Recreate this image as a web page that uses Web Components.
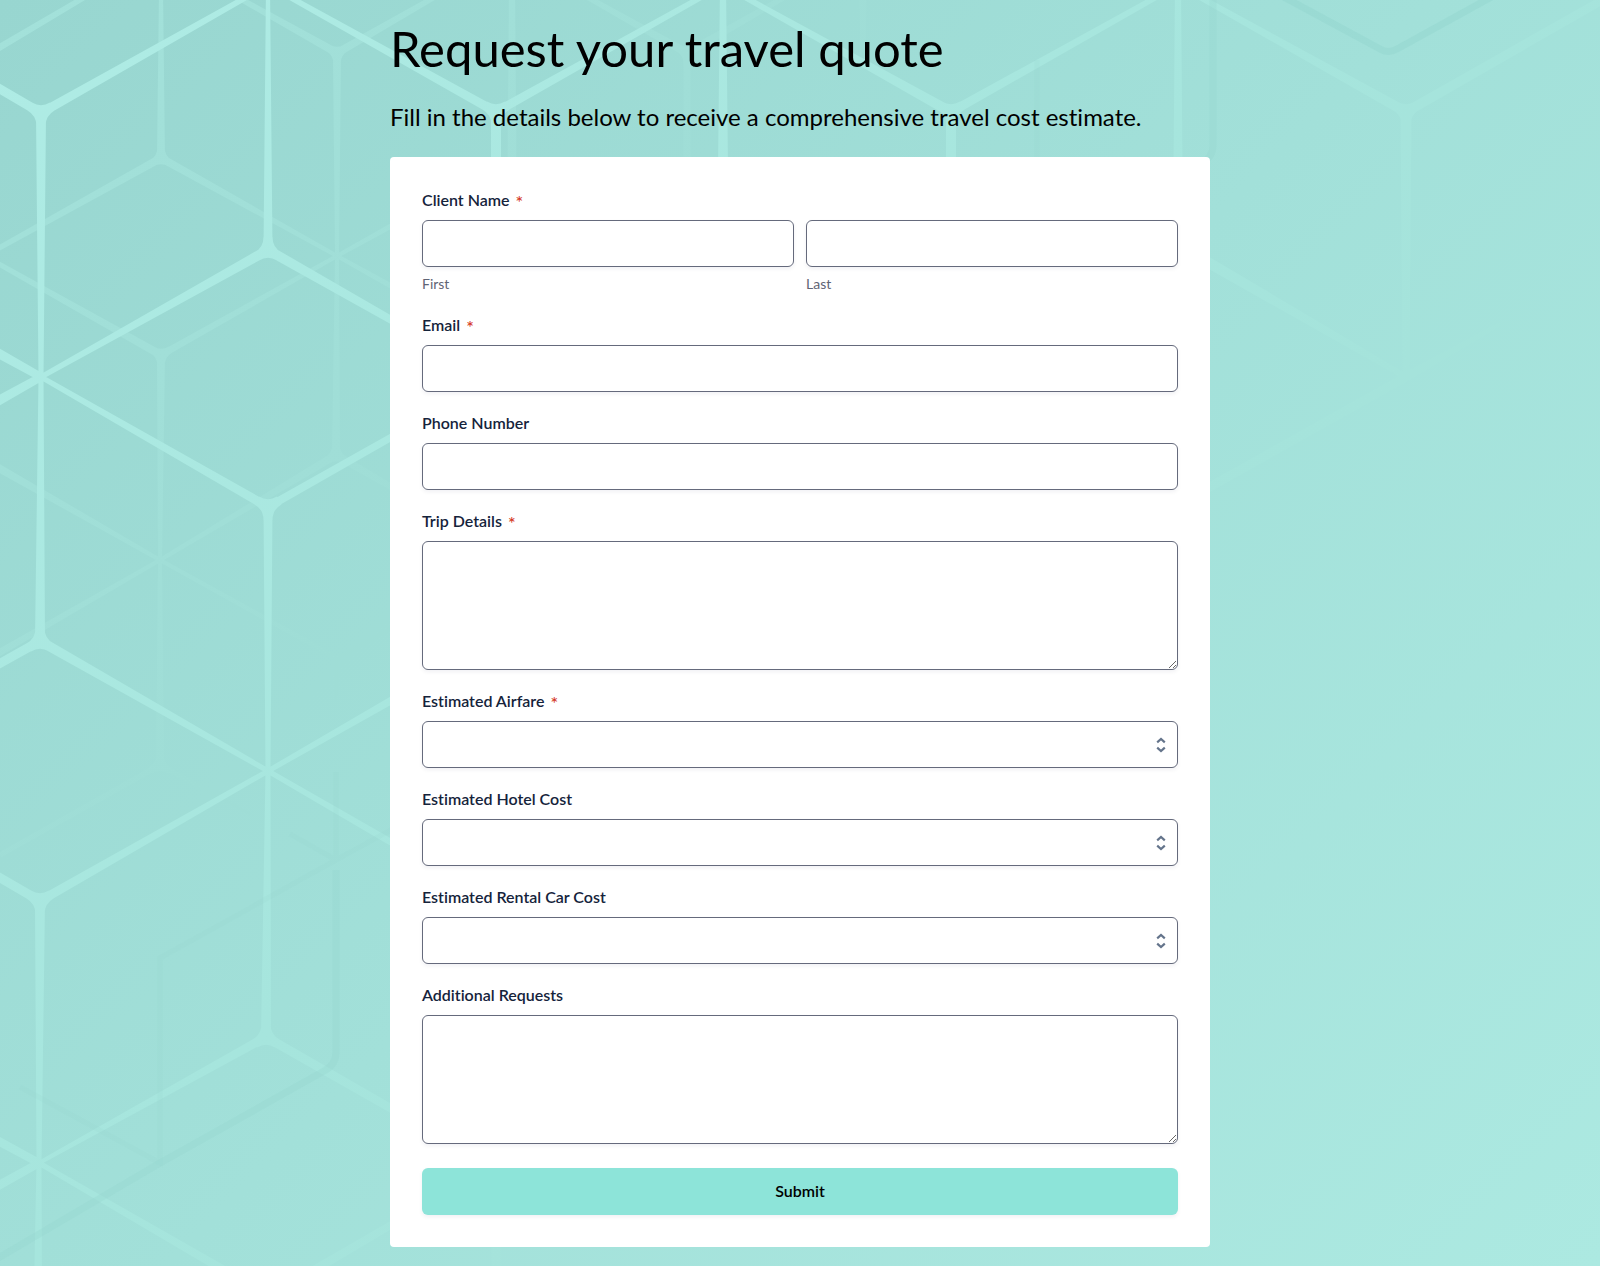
<!DOCTYPE html>
<html lang="en">
<head>
<meta charset="utf-8">
<meta name="viewport" content="width=device-width, initial-scale=1">
<title>Request your travel quote</title>
<style>
  body { margin: 0; font-family: Lato, "Open Sans", sans-serif; font-variant-ligatures: none; color: #000; }
</style>
</head>
<body>
<quote-page>
  <page-heading>
    <span slot="title">Request your travel quote</span>
    <span slot="intro">Fill in the details below to receive a comprehensive travel cost estimate.</span>
  </page-heading>
  <form-card>
    <name-field required>Client Name</name-field>
    <form-field type="email" required>Email</form-field>
    <form-field type="tel">Phone Number</form-field>
    <form-field type="textarea" required>Trip Details</form-field>
    <form-field type="select" required>Estimated Airfare</form-field>
    <form-field type="select">Estimated Hotel Cost</form-field>
    <form-field type="select">Estimated Rental Car Cost</form-field>
    <form-field type="textarea">Additional Requests</form-field>
    <submit-button slot="action">Submit</submit-button>
  </form-card>
</quote-page>

<script>
  const define = (name, html, setup) => {
    const template = document.createElement('template');
    template.innerHTML = html;
    customElements.define(name, class extends HTMLElement {
      constructor() {
        super();
        this.attachShadow({ mode: 'open' }).append(template.content.cloneNode(true));
      }
      connectedCallback() { if (setup) setup(this, this.shadowRoot); }
    });
  };

  const controlStyles = `
    *, *::before { box-sizing: border-box; }
    :host { display: block; }
    label, legend { padding: 0; color: #15233b; font-size: 16px; font-weight: 600; line-height: 22px; }
    .mark { color: #d4351c; font-size: 18px; font-weight: 500; line-height: 1; margin-left: 6px; vertical-align: -3px; }
    input, textarea, select {
      display: block; width: 100%; height: 47px; margin: 9px 0 0; padding: 8px 12px;
      font: inherit; font-size: 16px; color: #15233b; background-color: #fff;
      border: 1px solid #656a7c; border-radius: 6px;
      box-shadow: 0 2px 4px rgba(24, 24, 60, .06);
    }
    textarea { height: 129px; resize: vertical; }
    select { appearance: none; }
  `;

  /* Each edge: x1, y1, x2, y2, width at start, width at end */
  const bright = [
    [268,-15,268,250,4,9],[41,113,41,377,10,5],[41,377,40,641,5,10],[268,507,268,771,9,5],
    [268,771,266,1037,5,10],[40,901,39,1163,10,5],[39,1163,38,1290,5,8],
    [-10,83,41,113,9,9],[41,113,268,-15,9,5],[268,-15,496,112,5,9],[268,250,41,377,10,5],
    [268,250,497,380,10,6],[41,377,268,507,5,9],[-20,343,41,377,10,8],[-20,411,41,377,10,8],
    [268,507,420,421,8,7],[40,641,268,771,10,5],[40,641,-10,669,9,9],[268,771,420,684,5,8],
    [268,771,420,859,5,7],[268,771,40,901,5,9],[40,901,-10,872,9,9],[266,1037,420,1125,9,8],
    [266,1037,39,1163,9,4],[39,1163,-20,1131,8,9],[39,1163,-20,1196,8,9],[39,1163,260,1291,5,9],
    [420,1208,280,1290,7,9],[496,1240,496,1290,9,9],
    [496,112,496,170,10,10],[496,112,723,-15,9,5],[723,-15,723,170,6,10],[723,-15,951,112,5,10],
    [951,112,951,170,10,10],[951,112,1178,-15,9,5],[1178,-15,1178,170,6,9],[1178,-15,1406,112,5,10],
    [1406,112,1620,-10,10,8],[1406,112,1406,377,11,7],[1190,252,1406,377,11,6],
    [1406,377,1190,498,9,9],[1406,377,1500,324,9,4]
  ];
  const DOWN = [330, 210, 90], UP = [270, 150, 30];
  const brightHubs = [[41,113,DOWN],[268,250,UP],[268,507,DOWN],[40,641,UP],[40,901,DOWN],[266,1037,UP],
    [496,112,DOWN],[951,112,DOWN],[1406,112,DOWN]];
  const faint = [
    [161,-10,161,158,4,8],[161,158,-10,253,8,5],[161,158,337,256,8,4],[337,256,420,302,4,6],
    [337,256,420,210,4,6],[337,256,161,355,4,7],[-10,259,161,355,5,8],[161,355,160,560,8,4],
    [160,560,160,765,4,8],[337,53,337,256,8,4],[337,256,336,455,4,8],[230,-7,337,53,5,8],
    [337,53,440,-6,8,5],[-10,53,95,-9,7,5],[-10,463,160,560,8,4],[160,560,337,658,4,5],
    [337,658,400,624,5,5],[-10,658,160,560,7,4],[160,560,336,455,4,8],[336,455,400,492,8,6],
    [337,658,336,700,6,3],[160,765,0,855,6,5],[160,765,250,814,6,3],
    [512,-10,512,170,6,9],[580,-7,687,53,5,8],[687,53,790,-6,8,5],[687,53,687,170,7,7],[863,-10,863,60,7,6]
  ];
  const faintHubs = [[161,158,UP],[161,355,DOWN],[337,53,DOWN],[336,455,UP],[160,765,UP],[687,53,DOWN]];

  const at = (x, y) => x.toFixed(1) + ' ' + y.toFixed(1);
  const tapered = ([x1, y1, x2, y2, a, b]) => {
    const length = Math.hypot(x2 - x1, y2 - y1);
    const nx = -(y2 - y1) / length / 2, ny = (x2 - x1) / length / 2;
    const point = (x, y, w) => at(x + nx * w, y + ny * w);
    return `M${point(x1, y1, a)}L${point(x2, y2, b)}L${point(x2, y2, -b)}L${point(x1, y1, -a)}Z`;
  };
  /* A three-armed joint whose inner corners are rounded */
  const joint = (reach, half) => ([x, y, arms]) => {
    const polar = (angle, r) => [r * Math.cos(angle * Math.PI / 180), r * Math.sin(angle * Math.PI / 180)];
    const side = (arm, turn) => {
      const [ax, ay] = polar(arm, reach), [bx, by] = polar(arm + turn, half);
      return at(x + ax + bx, y + ay + by);
    };
    return arms.map((arm, i) => {
      const [cx, cy] = polar(arm - 60, half * 1.15);
      return `${i ? 'L' : 'M'}${side(arm, -90)}Q${at(x + cx, y + cy)} ${side(arm - 120, 90)}`;
    }).join('') + 'Z';
  };

  define('lattice-backdrop', `
    <style>
      :host { display: block; position: absolute; inset: 0; overflow: hidden;
        background: linear-gradient(135deg, #98d6d0 0%, #a2e0d9 50%, #ace9e1 100%); }
      svg { display: block; width: 100%; height: 100%; }
    </style>
    <svg viewBox="0 0 1600 1266" preserveAspectRatio="xMinYMin slice" aria-hidden="true">
      <defs>
        <linearGradient id="glow" gradientUnits="userSpaceOnUse" x1="0" y1="0" x2="1433" y2="1433">
          <stop offset="0" stop-color="#afece5"/>
          <stop offset=".45" stop-color="#a6e5dd"/>
          <stop offset=".62" stop-color="#a5e3db"/>
          <stop offset="1" stop-color="#a5e3db"/>
        </linearGradient>
        <linearGradient id="mist" gradientUnits="userSpaceOnUse" x1="0" y1="0" x2="500" y2="500">
          <stop offset="0" stop-color="#a3e1da"/>
          <stop offset="1" stop-color="#9fddd6"/>
        </linearGradient>
      </defs>
      <path id="faint" fill="url(#mist)"/>
      <path id="bright" fill="url(#glow)"/>
      <g fill="none" stroke="#92d3cd" stroke-opacity=".28" stroke-width="7">
        <path d="M336 870V1052Q336 1065 324 1071L160 1163L-5 1260"/>
        <path d="M1213 -5V145Q1213 157 1202 163"/>
        <path stroke-opacity=".42" d="M1280 -5L1380 49Q1388 54 1397 49L1495 -5"/>
        <path stroke-opacity=".14" stroke-width="5" d="M336 772V860L160 958V1163L20 1087M290 834L336 860L400 825M1037 60V170"/>
      </g>
    </svg>`, (el, root) => {
      root.getElementById('bright').setAttribute('d', bright.map(tapered).concat(brightHubs.map(joint(13, 4.5))).join(''));
      root.getElementById('faint').setAttribute('d', faint.map(tapered).concat(faintHubs.map(joint(11, 3.5))).join(''));
    });

  define('quote-page', `
    <style>
      :host { display: block; position: relative; min-height: 100vh; box-sizing: border-box; padding: 16px 16px 18px; }
      main { position: relative; max-width: 820px; margin: 0 auto; }
    </style>
    <lattice-backdrop></lattice-backdrop>
    <main><slot></slot></main>`);

  define('page-heading', `
    <style>
      :host { display: block; }
      h1 { margin: 0; font-size: 49px; font-weight: 400; line-height: 64px; }
      p { margin: 0; padding: 19px 0 22px; font-size: 24px; line-height: 36px; }
    </style>
    <h1><slot name="title"></slot></h1>
    <p><slot name="intro"></slot></p>`);

  define('form-card', `
    <style>
      :host { display: block; }
      form { display: flex; flex-direction: column; gap: 24px; padding: 32px; background: #fff; border-radius: 4px; }
      .fields { display: flex; flex-direction: column; gap: 20px; }
    </style>
    <form><div class="fields"><slot></slot></div><slot name="action"></slot></form>`);

  define('name-field', `
    <style>${controlStyles}
      fieldset { border: 0; margin: 0; padding: 0; min-width: 0; }
      legend { display: block; }
      .pair { display: grid; grid-template-columns: 1fr 1fr; gap: 12px; }
      .part { display: flex; flex-direction: column; }
      .part label { order: 1; margin-top: 7px; color: #5f6475; font-size: 14px; font-weight: 400; line-height: 20px; }
    </style>
    <fieldset>
      <legend><slot></slot><span class="mark">*</span></legend>
      <div class="pair">
        <div class="part"><label for="first">First</label><input id="first" type="text" required></div>
        <div class="part"><label for="last">Last</label><input id="last" type="text" required></div>
      </div>
    </fieldset>`);

  define('form-field', `
    <style>${controlStyles}
      label { display: block; }
      .picker { display: grid; }
      .picker > * { grid-area: 1 / 1; }
      .picker svg { align-self: center; justify-self: end; width: 10px; height: 16px; margin: 9px 12px 0 0; pointer-events: none; z-index: 1; }
    </style>
    <label for="control"><slot></slot></label>`, (el, root) => {
      if (root.getElementById('control')) return;
      const type = el.getAttribute('type');
      const required = el.hasAttribute('required');
      const control = document.createElement(type === 'textarea' || type === 'select' ? type : 'input');
      control.id = 'control';
      control.required = required;
      if (control.localName === 'input') control.type = type;
      if (required) {
        const mark = document.createElement('span');
        mark.className = 'mark';
        mark.textContent = '*';
        root.querySelector('label').append(mark);
      }
      if (type === 'select') {
        control.append(new Option('', ''));
        const picker = document.createElement('div');
        picker.className = 'picker';
        picker.innerHTML = '<svg viewBox="0 0 10 16" fill="none" stroke="#64748b" stroke-width="2.2" aria-hidden="true"><path d="M1.200 5.300L5 2l3.800 3.300M1.200 10.700L5 14l3.800-3.300"/></svg>';
        picker.prepend(control);
        root.append(picker);
      } else {
        root.append(control);
      }
    });

  define('submit-button', `
    <style>
      :host { display: block; }
      button { display: block; width: 100%; height: 47px; padding: 0 16px 2px; border: 0; border-radius: 6px;
        background: #8de4d9; color: #000; font: inherit; font-size: 16px; font-weight: 600; cursor: pointer;
        box-shadow: 0 2px 4px rgba(24, 24, 60, .06); }
    </style>
    <button type="submit"><slot></slot></button>`);
</script>
</body>
</html>
